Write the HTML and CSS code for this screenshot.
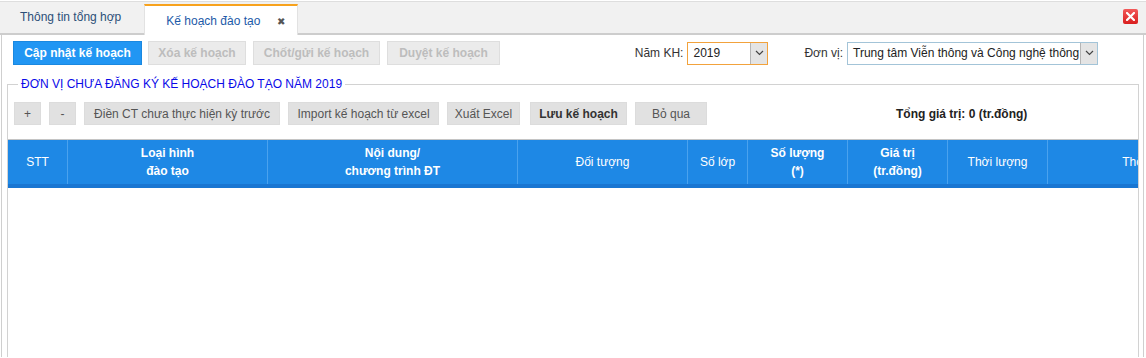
FILE: index.html
```html
<!DOCTYPE html>
<html lang="vi">
    <head>
        <meta charset="UTF-8">
        <meta name="viewport" content="width=device-width, initial-scale=1.0">
        <title>Kế hoạch đào tạo</title>
        <link rel="stylesheet" href="styles.css">
    </head>
    <body>
        <div class="tabbar">
            <div class="tab">Thông tin tổng hợp</div>
            <div class="tab active">Kế hoạch đào tạo <span class="tab-x">&#10006;</span></div>
            <div class="win-close">
                <svg width="9" height="9" viewBox="0 0 9 9"><path d="M1 1L8 8M8 1L1 8" stroke="#fff" stroke-width="2.2" stroke-linecap="square"/></svg>
            </div>
        </div>
        <main class="panel">
            <div class="toolbar">
                <button class="btn primary">Cập nhật kế hoạch</button>
                <button class="btn disabled">Xóa kế hoạch</button>
                <button class="btn disabled">Chốt/gửi kế hoạch</button>
                <button class="btn disabled">Duyệt kế hoạch</button>
                <label class="lbl year-lbl">Năm KH:</label>
                <div class="combo year">
                    <span class="combo-text">2019</span>
                    <span class="combo-arrow"><svg width="9" height="6" viewBox="0 0 9 6"><path d="M1 1L4.5 4.5L8 1" fill="none" stroke="#444" stroke-width="1.2"/></svg></span>
                </div>
                <label class="lbl unit-lbl">Đơn vị:</label>
                <div class="combo unit">
                    <span class="combo-text">Trung tâm Viễn thông và Công nghệ thông tin</span>
                    <span class="combo-arrow"><svg width="9" height="6" viewBox="0 0 9 6"><path d="M1 1L4.5 4.5L8 1" fill="none" stroke="#444" stroke-width="1.2"/></svg></span>
                </div>
            </div>
            <fieldset class="group">
                <legend>ĐƠN VỊ CHƯA ĐĂNG KÝ KẾ HOẠCH ĐÀO TẠO NĂM 2019</legend>
                <div class="actions">
                    <button class="btn gray sq">+</button>
                    <button class="btn gray sq">-</button>
                    <button class="btn gray w196">Điền CT chưa thực hiện kỳ trước</button>
                    <button class="btn gray w151">Import kế hoạch từ excel</button>
                    <button class="btn gray w73">Xuất Excel</button>
                    <button class="btn gray bold w97">Lưu kế hoạch</button>
                    <button class="btn gray w72">Bỏ qua</button>
                    <span class="total">Tổng giá trị: 0 (tr.đồng)</span>
                </div>
                <div class="grid-wrap">
                    <div class="grid-head">
                        <div class="th">STT</div>
                        <div class="th b">Loại hình<br>đào tạo</div>
                        <div class="th b">Nội dung/<br>chương trình ĐT</div>
                        <div class="th">Đối tượng</div>
                        <div class="th">Số lớp</div>
                        <div class="th b">Số lượng<br>(*)</div>
                        <div class="th b">Giá trị<br>(tr.đồng)</div>
                        <div class="th">Thời lượng</div>
                        <div class="th">Thời gian</div>
                    </div>
                </div>
            </fieldset>
        </main>
    </body>
</html>
```

FILE: styles.css
```css
*,*::before,*::after{
    box-sizing: border-box;
}
body{
    margin: 0;
    font-family: "Liberation Sans", Arial, sans-serif;
    font-size: 12px;
    color: #333;
    background: #fff;
    overflow: hidden;
}
.tabbar{
    display: flex;
    align-items: flex-end;
    height: 34px;
    margin-top: 1px;
    border-top: 1px solid #dedede;
    border-bottom: 2px solid #cdcdcd;
    background: #f1f1f1;
}
.tab{
    height: 31px;
    line-height: 30px;
    padding: 0 20px;
    color: #2c4f78;
    font-size: 12px;
    white-space: nowrap;
}
.tab.active{
    width: 154px;
    margin-left: 3px;
    margin-bottom: -2px;
    height: 31px;
    padding-left: 21px;
    padding-right: 0;
    background: #fff;
    border-top: 2px solid #f7a21d;
    border-left: 1px solid #e2e2e2;
    border-right: 1px solid #e2e2e2;
    color: #1c5aa8;
}
.tab-x{
    margin-left: 13px;
    color: #555;
    font-size: 10px;
}
.win-close{
    display: flex;
    align-items: center;
    justify-content: center;
    width: 15px;
    height: 15px;
    margin: 7px 8px 0 auto;
    align-self: flex-start;
    border-radius: 2px;
    background: linear-gradient(#f25a5a, #d91e1e);
}
.panel{
    margin: 0 2px 0 1px;
    height: 322px;
    overflow: hidden;
    border-left: 1px solid #cfcfcf;
    border-right: 1px solid #cfcfcf;
}
.toolbar{
    display: flex;
    align-items: center;
    padding: 6px 0 0 11px;
    height: 30px;
}
.btn{
    height: 24px;
    margin-right: 6px;
    padding: 0;
    border: 1px solid transparent;
    font-family: inherit;
    font-size: 12px;
    white-space: nowrap;
    cursor: pointer;
}
.btn.primary{
    width: 129px;
    background: #2196f3;
    border-color: #1a88e0;
    color: #fff;
    font-weight: bold;
}
.btn.disabled{
    background: #ebebeb;
    border-color: #dedede;
    color: #bdbdbd;
    font-weight: bold;
    margin-right: 7px;
}
.btn.disabled:nth-child(2){ width: 98px; }
.btn.disabled:nth-child(3){ width: 127px; }
.btn.disabled:nth-child(4){ width: 113px; }
.lbl{
    color: #333;
    margin-right: 4px;
    white-space: nowrap;
}
.year-lbl{
    margin-left: auto;
}
.unit-lbl{
    margin-left: 36px;
}
.combo{
    display: flex;
    align-items: stretch;
    height: 23px;
    background: #fff;
    overflow: hidden;
}
.combo-text{
    flex: 1;
    padding-left: 5px;
    line-height: 21px;
    font-size: 12px;
    color: #222;
    white-space: nowrap;
    overflow: hidden;
}
.combo-arrow{
    display: flex;
    align-items: center;
    justify-content: center;
    width: 17px;
    flex-shrink: 0;
    background: #e4e4e4;
    border-left: 1px solid #b5b5b5;
}
.combo.year{
    width: 81px;
    border: 1px solid #f2a23c;
}
.combo.unit{
    width: 251px;
    margin-right: 45px;
    border: 1px solid #a3c4d8;
}
.group{
    margin: 12px 4px 0 5px;
    padding: 0;
    min-width: 0;
    height: 300px;
    border: 1px solid #d2d2d2;
}
.group legend{
    margin-left: 10px;
    padding: 0 3px;
    color: #0a0ae8;
    font-size: 12px;
}
.actions{
    display: flex;
    align-items: center;
    padding: 11px 0 0 6px;
}
.btn.gray{
    height: 23px;
    margin-right: 8px;
    background: #e1e1e1;
    border-color: #dcdcdc;
    color: #555;
}
.btn.gray.bold{
    font-weight: bold;
    color: #333;
}
.btn.sq{ width: 27px; }
.w196{ width: 196px; }
.w151{ width: 151px; }
.btn.w73{ width: 73px; margin-right: 10px; }
.w97{ width: 97px; }
.w72{ width: 72px; }
.total{
    margin-left: 181px;
    font-weight: bold;
    color: #222;
    white-space: nowrap;
}
.grid-wrap{
    margin-top: 14px;
    overflow: hidden;
    border-top: 1px solid #c4c4c4;
}
.grid-head{
    display: grid;
    grid-template-columns: 60px 200px 250px 170px 60px 100px 100px 100px 200px;
    width: 1240px;
    background: #1e88e5;
    border-bottom: 4px solid #1976d2;
}
.th{
    display: flex;
    align-items: center;
    justify-content: center;
    height: 44px;
    line-height: 18px;
    text-align: center;
    color: #fff;
    white-space: nowrap;
    border-right: 1px solid #4aa2ee;
}
.th.b{
    font-weight: bold;
}
```
